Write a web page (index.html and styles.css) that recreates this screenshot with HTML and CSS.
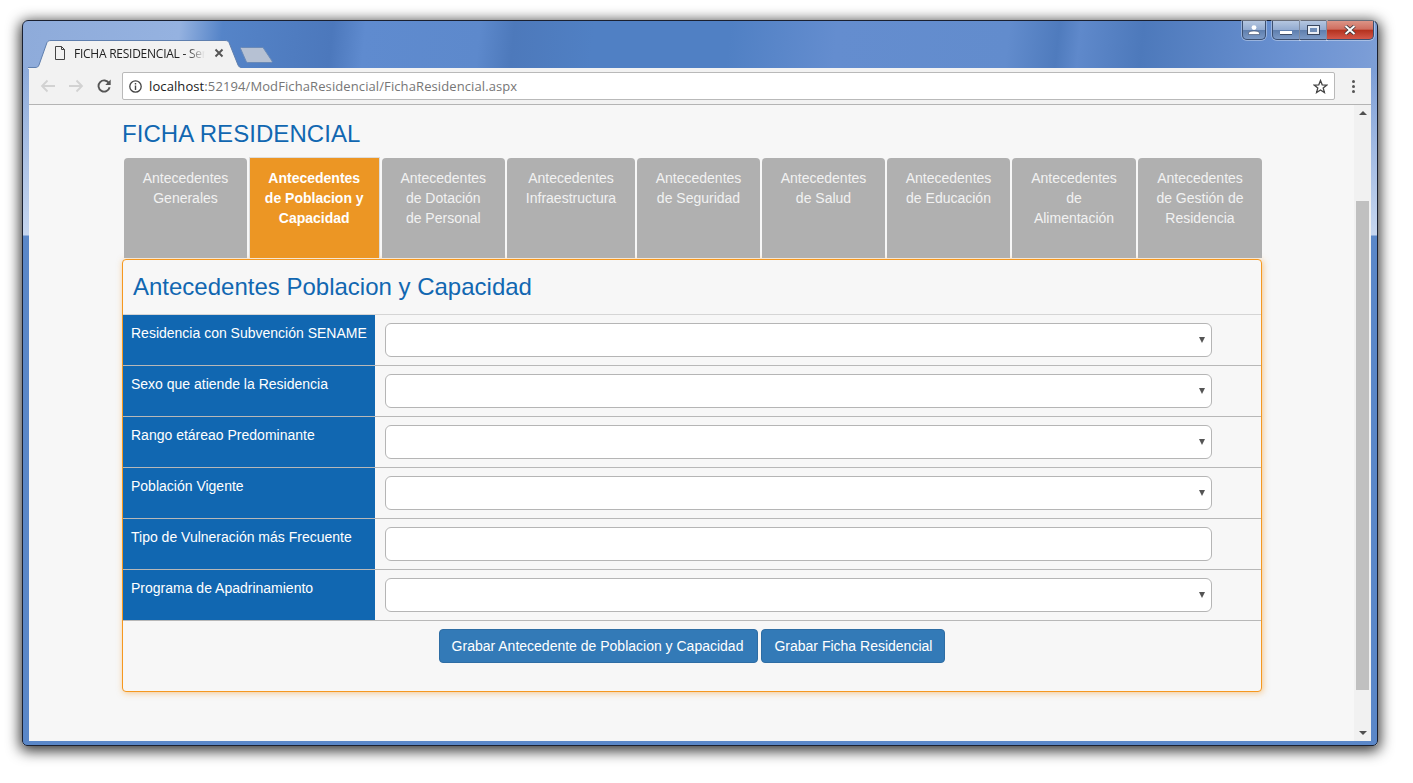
FILE: index.html
```html
<!DOCTYPE html>
<html lang="es">

<head>
  <meta charset="UTF-8">
  <title>FICHA RESIDENCIAL - Servicio</title>
  <link rel="stylesheet" href="styles.css">
</head>

<body>
  <div class="window">
    <div class="caption">
      <span class="cap-btn cap-user">
        <svg width="12" height="10" viewBox="0 0 12 10"><circle cx="6" cy="2.600" r="2.400" fill="#fff"/><path d="M.5 9.500V8c0-1.200 2.500-2 5.500-2s5.500 .8 5.500 2v1.500z" fill="#fff" stroke="#2b3550" stroke-width=".5"/></svg>
      </span>
      <div class="cap-group">
        <span class="cap-btn cap-min"><i></i></span>
        <span class="cap-btn cap-max"><i></i></span>
        <span class="cap-btn cap-close">
          <svg width="14" height="10" viewBox="0 0 14 10"><path d="M2.500 1 L11.500 9 M11.500 1 L2.500 9" stroke="#33343a" stroke-width="3.600" fill="none"/><path d="M2.500 1 L11.500 9 M11.500 1 L2.500 9" stroke="#fff" stroke-width="2" fill="none"/></svg>
        </span>
      </div>
    </div>

    <div class="tabstrip">
      <div class="tab">
        <svg class="tab-shape" width="213" height="29" viewBox="0 0 213 29"><path d="M0 27.500 H7 C9.500 27.500 10 27 11 25 L19 2.500 C20 1 21 .5 23 .5 H197 C199 .5 200 1 201 2.500 L210 25 C211 27 212 27.500 213 27.500 V29 H0z" fill="#f2f2f2"/><path d="M0 27.500 H7 C9.500 27.500 10 27 11 25 L19 2.500 C20 1 21 .5 23 .5 H197 C199 .5 200 1 201 2.500 L210 25 C211 27 212 27.500 213 27.500" fill="none" stroke="#5f7fae"/></svg>
        <svg class="tab-icon" width="12" height="14" viewBox="0 0 12 14"><path d="M1.500 .5 H7.500 L10.500 3.500 V13.500 H1.500z M7.500 .5 V3.500 H10.500" fill="none" stroke="#444" stroke-width="1"/></svg>
        <span class="tab-title">FICHA RESIDENCIAL - Ser</span>
        <svg class="tab-x" width="10" height="10" viewBox="0 0 10 10"><path d="M1.500 1.500 L8.500 8.500 M8.500 1.500 L1.500 8.500" stroke="#555" stroke-width="1.900"/></svg>
      </div>
      <svg class="newtab" width="33" height="16" viewBox="0 0 33 16"><path d="M1.500 .5 H23 L32 14 C32.500 15 32 15.500 31 15.500 H8 C7 15.500 6.500 15 6 14 L.5 1.500 C.3 1 .7 .5 1.500 .5z" fill="#b6c1d3" stroke="#6a8ab8"/></svg>
    </div>

    <div class="toolbar">
      <svg class="nav-icon" width="16" height="14" viewBox="0 0 16 14"><path d="M15 7H2 M7.500 1.500 L2 7 L7.500 12.500" fill="none" stroke="#d2d2d2" stroke-width="1.800"/></svg>
      <svg class="nav-icon" width="16" height="14" viewBox="0 0 16 14"><path d="M1 7H14 M8.500 1.500 L14 7 L8.500 12.500" fill="none" stroke="#d2d2d2" stroke-width="1.800"/></svg>
      <svg class="nav-icon reload" width="14" height="14" viewBox="0 0 14 14"><path d="M12 4.200 A5.600 5.600 0 1 0 12.600 8.300" fill="none" stroke="#555" stroke-width="1.900"/><path d="M13.700 .6 V6 H8.300z" fill="#555"/></svg>
      <div class="omnibox">
        <svg width="13" height="13" viewBox="0 0 13 13"><circle cx="6.500" cy="6.500" r="5.700" fill="none" stroke="#444" stroke-width="1.300"/><path d="M6.500 5.500 V10 M6.500 3 V4.400" stroke="#444" stroke-width="1.400"/></svg>
        <span class="url"><b>localhost</b>:52194/ModFichaResidencial/FichaResidencial.aspx</span>
        <svg class="star" width="15" height="15" viewBox="0 0 15 15"><path d="M7.500 1.500 L9.200 5.800 L13.800 6.100 L10.200 9 L11.400 13.500 L7.500 11 L3.600 13.500 L4.800 9 L1.200 6.100 L5.800 5.800z" fill="none" stroke="#444" stroke-width="1.300"/></svg>
      </div>
      <span class="menu-dots"><i></i><i></i><i></i></span>
    </div>

    <div class="viewport">
      <main class="page">
        <h1 class="title">FICHA RESIDENCIAL</h1>

        <ul class="tabs">
          <li><a>Antecedentes Generales</a></li>
          <li class="active"><a>Antecedentes de Poblacion y Capacidad</a></li>
          <li><a>Antecedentes de Dotación de Personal</a></li>
          <li><a>Antecedentes Infraestructura</a></li>
          <li><a>Antecedentes de Seguridad</a></li>
          <li><a>Antecedentes de Salud</a></li>
          <li><a>Antecedentes de Educación</a></li>
          <li><a>Antecedentes de Alimentación</a></li>
          <li><a>Antecedentes de Gestión de Residencia</a></li>
        </ul>

        <section class="panel">
          <h2 class="panel-title">Antecedentes Poblacion y Capacidad</h2>

          <div class="row">
            <label class="row-label">Residencia con Subvención SENAME</label>
            <div class="row-field select-wrap"><select></select></div>
          </div>
          <div class="row">
            <label class="row-label">Sexo que atiende la Residencia</label>
            <div class="row-field select-wrap"><select></select></div>
          </div>
          <div class="row">
            <label class="row-label">Rango etáreao Predominante</label>
            <div class="row-field select-wrap"><select></select></div>
          </div>
          <div class="row">
            <label class="row-label">Población Vigente</label>
            <div class="row-field select-wrap"><select></select></div>
          </div>
          <div class="row">
            <label class="row-label">Tipo de Vulneración más Frecuente</label>
            <div class="row-field"><input type="text"></div>
          </div>
          <div class="row">
            <label class="row-label">Programa de Apadrinamiento</label>
            <div class="row-field select-wrap"><select></select></div>
          </div>

          <div class="actions">
            <button class="btn btn-wide">Grabar Antecedente de Poblacion y Capacidad</button>
            <button class="btn">Grabar Ficha Residencial</button>
          </div>
        </section>
      </main>

      <aside class="scrollbar">
        <span class="arrow arrow-up"></span>
        <span class="thumb"></span>
        <span class="arrow arrow-down"></span>
      </aside>
    </div>
  </div>
</body>

</html>
```

FILE: styles.css
```css
* {
  box-sizing: border-box;
}

body {
  margin: 0;
  height: 783px;
  padding: 20px 35px 37px 22px;
  background: #fff;
  font-family: "Liberation Sans", Arial, sans-serif;
  font-size: 14px;
  overflow: hidden;
}

/* ventana de windows 7 */
.window {
  position: relative;
  height: 100%;
  display: flex;
  flex-direction: column;
  padding: 0 6px 4px 6px;
  border: 1px solid #1a2030;
  border-radius: 6px 6px 5px 5px;
  background:
    linear-gradient(180deg, rgba(200, 216, 240, 0) 0, rgba(200, 216, 240, 0) 50px, #c6d6ef 214px, #5a87c8 215px, #5a87c8 100%),
    linear-gradient(96deg, #8eabda 0, #95b2e0 11%, #5584c8 14%, #4c78bc 21.700%, #5f8bcf 24%, #5d89cc 32%, #4d79bb 34.400%, #5080c4 40%, #5080c4 49.500%, #648dcf 57%, #628ccd 69%, #4f7bbd 72.500%, #5f89cb 74%, #4d79bb 78.400%, #6a91d1 88.700%, #7a9cd6 94%, #8fadda 100%);
  box-shadow: 0 3px 14px 2px rgba(0, 0, 0, .8);
}

.caption {
  position: absolute;
  top: 0;
  right: 3px;
  display: flex;
  gap: 6px;
}

.cap-group {
  display: flex;
}

.cap-btn {
  display: flex;
  justify-content: center;
  align-items: center;
  height: 19px;
  border: 1px solid #3c4f6f;
  border-top: 0;
  background: linear-gradient(180deg, #b4c6e0 0, #93abd0 48%, #5f7fae 52%, #7c9ac6 100%);
  box-shadow: 0 0 0 1px rgba(255, 255, 255, .35);
}

.cap-user {
  width: 24px;
  border-radius: 0 0 5px 5px;
}

.cap-min {
  width: 28px;
  border-radius: 0 0 0 5px;
}

.cap-min i {
  width: 12px;
  height: 4px;
  margin-top: 6px;
  background: #fff;
  border: 1px solid #3d4c66;
  border-width: 0 0 1px;
}

.cap-max {
  width: 27px;
  border-left: 0;
}

.cap-max i {
  width: 11px;
  height: 8px;
  border: 2px solid #e8edf5;
  outline: 1px solid #39465e;
  background: #6f8db8;
}

.cap-close {
  width: 47px;
  border-left: 0;
  border-radius: 0 0 5px 0;
  background: linear-gradient(180deg, #dc9486 0, #cf6f60 45%, #b5321f 52%, #d4584a 100%);
}

.tabstrip {
  flex: none;
  height: 47px;
  display: flex;
  align-items: flex-end;
}

.tab {
  position: relative;
  width: 213px;
  height: 29px;
  display: flex;
  align-items: center;
  padding: 0 0 3px 26px;
  margin: 0 0 -1px -1px;
  z-index: 1;
}

.tab-shape {
  position: absolute;
  top: 0;
  left: 0;
}

.tab-icon,
.tab-x,
.tab-title {
  position: relative;
}

.tab-title {
  width: 131px;
  margin-left: 8px;
  white-space: nowrap;
  font-family: "Open Sans", sans-serif;
  font-size: 12px;
  letter-spacing: -.25px;
  color: #222;
  -webkit-mask-image: linear-gradient(90deg, #000 86%, transparent 100%);
  mask-image: linear-gradient(90deg, #000 86%, transparent 100%);
}

.tab-x {
  margin-left: 9px;
}

.newtab {
  margin: 0 0 5px -1px;
  flex: none;
}

.toolbar {
  flex: none;
  height: 37px;
  display: flex;
  align-items: center;
  padding: 0 16px 0 11px;
  background: #f2f2f2;
  border-bottom: 1px solid #b4b4b4;
}

.nav-icon {
  margin-right: 12px;
  flex: none;
}

.nav-icon.reload {
  margin: 0 11px 0 1px;
}

.omnibox {
  flex: 1;
  height: 28px;
  display: flex;
  align-items: center;
  gap: 7px;
  padding: 0 6px;
  background: #fff;
  border: 1px solid #b9b9b9;
  border-radius: 2px;
}

.url {
  flex: 1;
  font-family: "Open Sans", sans-serif;
  font-size: 13px;
  letter-spacing: .1px;
  color: #767676;
}

.url b {
  font-weight: 400;
  color: #1a1a1a;
}

.menu-dots {
  display: flex;
  flex-direction: column;
  gap: 2px;
  margin-left: 17px;
}

.menu-dots i {
  width: 3px;
  height: 3px;
  border-radius: 50%;
  background: #555;
}

.viewport {
  flex: 1;
  min-height: 0;
  display: flex;
  background: #f7f7f7;
}

.page {
  flex: 1;
  min-width: 0;
  padding: 0 92px 0 93px;
}

.title {
  margin: 16px 0 10px;
  font-size: 24px;
  font-weight: 400;
  line-height: 26px;
  letter-spacing: .06px;
  color: #1167b1;
}

.tabs {
  display: grid;
  grid-template-columns: 123px 130.500px 123.500px 128px 123px 123px 123px 124px 124px;
  gap: 2px;
  height: 101px;
  margin: 0 0 1px 2px;
  padding: 0;
  list-style: none;
}

.tabs li {
  margin-top: 1px;
  padding: 10px 15px;
  background: #b0b0b0;
  border-radius: 4px 4px 0 0;
  text-align: center;
  line-height: 20px;
  color: #f2f2f2;
}

.tabs li.active {
  margin-top: 0;
  padding: 10px 14px;
  background: #ec9624;
  border: 1px solid #dddddd;
  border-bottom: 0;
  border-radius: 0;
  font-weight: 700;
  color: #fff;
}

.panel {
  height: 433px;
  border: 1px solid #f5981f;
  border-radius: 4px;
  background: #f7f7f7;
  box-shadow: 1px 1px 6px rgba(245, 152, 31, .5);
}

.panel-title {
  margin: 0;
  height: 54px;
  padding: 13px 10px 0;
  font-size: 24px;
  font-weight: 400;
  line-height: 28px;
  color: #1167b1;
}

.row {
  display: flex;
  height: 51px;
  border-top: 1px solid #d5d5d5;
}

.row + .row {
  border-top-color: #b8b8b8;
}

.row-label {
  flex: none;
  width: 252px;
  padding: 8px;
  background: #1167b1;
  color: #fff;
  line-height: 20px;
}

.row-field {
  position: relative;
  width: 827px;
  margin: 8px 0 0 10px;
}

.row-field select,
.row-field input {
  display: block;
  width: 100%;
  height: 34px;
  background: #fff;
  border: 1px solid #b5b5b5;
  border-radius: 6px;
  appearance: none;
}

.select-wrap::after {
  content: "";
  position: absolute;
  top: 14px;
  right: 7px;
  border: 3.500px solid transparent;
  border-top: 6px solid #555;
  border-bottom: 0;
}

.actions {
  display: flex;
  justify-content: center;
  gap: 3px;
  padding-top: 8px;
  border-top: 1px solid #b8b8b8;
}

.btn {
  height: 34px;
  padding: 6px 12px;
  background: #337ab7;
  border: 1px solid #2e6da4;
  border-radius: 4px;
  color: #fff;
  font-family: inherit;
  font-size: 14px;
}

.btn-wide {
  padding-right: 14px;
}

.scrollbar {
  flex: none;
  width: 17px;
  display: flex;
  flex-direction: column;
  align-items: center;
  background: #f1f1f1;
}

.arrow {
  width: 0;
  height: 0;
  border: 4px solid transparent;
}

.arrow-up {
  margin-top: 6px;
  border-top: 0;
  border-bottom: 4px solid #505050;
}

.arrow-down {
  margin-top: auto;
  margin-bottom: 6px;
  border-bottom: 0;
  border-top: 4px solid #505050;
}

.thumb {
  width: 13px;
  height: 489px;
  margin-top: 86px;
  background: #c0c0c0;
}
```
